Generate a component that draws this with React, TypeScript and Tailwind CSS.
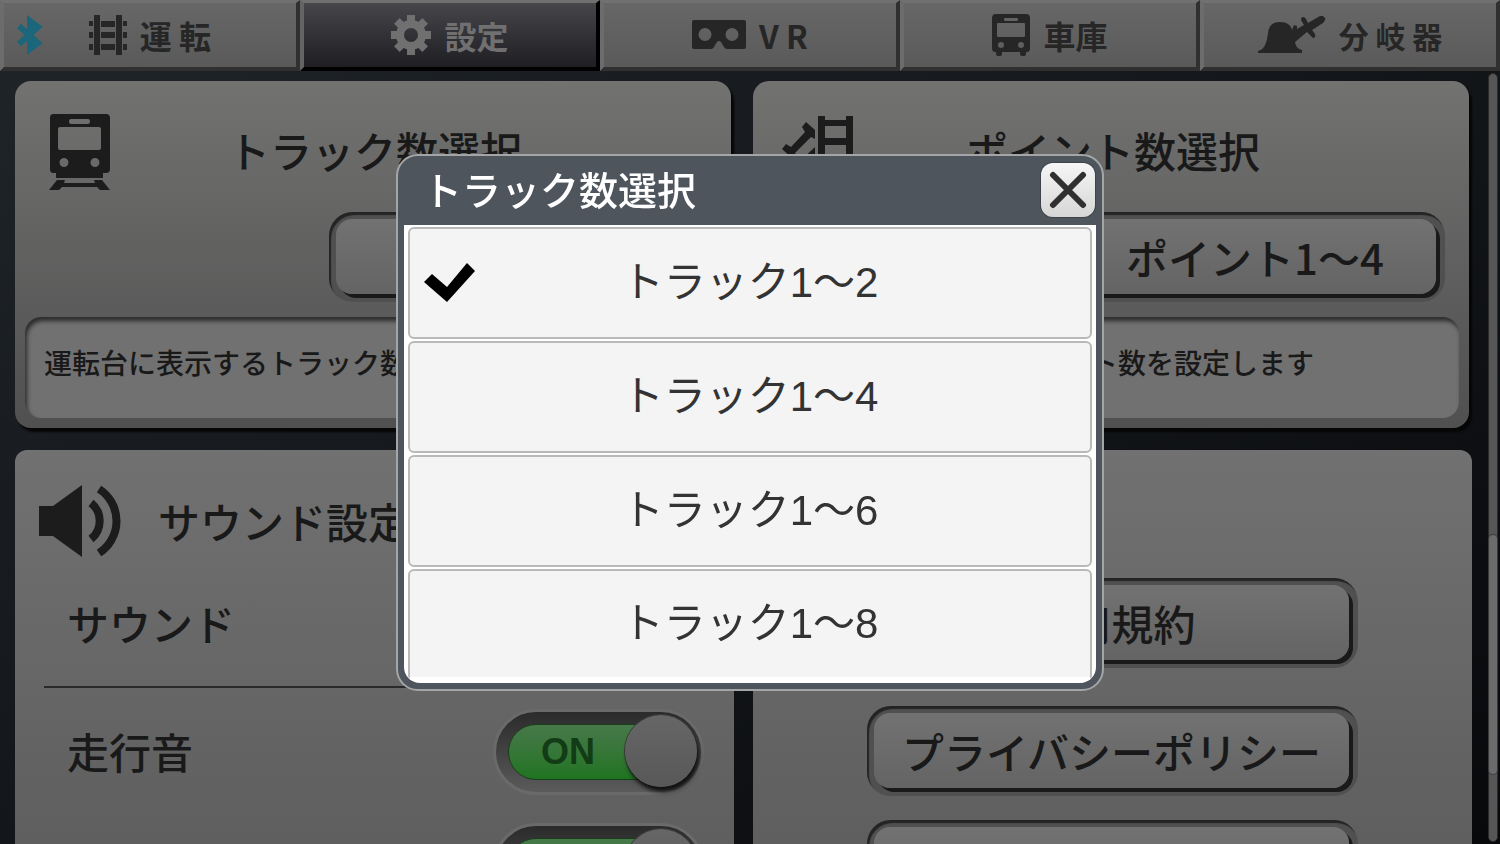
import React, { useState } from 'react';

const TRACK_OPTIONS = ['トラック1〜2', 'トラック1〜4', 'トラック1〜6', 'トラック1〜8'];

const RailIcon = () => (
	<svg width="38" height="40" viewBox="0 0 38 40" fill="#262626" aria-hidden="true">
		<path d="M5 0h6v40H5zM27 0h6v40h-6zM12 6h14v6H12zM12 17h14v6H12zM12 29h14v6H12zM0 6h4v5H0zM0 17h4v6H0zM0 29h4v6H0zM34 6h4v5h-4zM34 17h4v6h-4zM34 29h4v6h-4z" />
	</svg>
);

const GearIcon = () => (
	<svg width="40" height="40" viewBox="-20 -20 40 40" fill="#707070" aria-hidden="true">
		<path fillRule="evenodd" d="M0-15a15 15 0 1 0 0 30a15 15 0 1 0 0-30zM0-7a7 7 0 1 1 0 14a7 7 0 1 1 0-14z" />
		{[0, 45, 90, 135, 180, 225, 270, 315].map((deg) => (
			<path key={deg} transform={`rotate(${deg})`} d="M-4-20h8v8h-8z" />
		))}
	</svg>
);

const GogglesIcon = () => (
	<svg width="54" height="30" viewBox="0 0 54 30" fill="#262626" aria-hidden="true">
		<path fillRule="evenodd" d="M2 0H52Q54 0 54 2V27Q54 29 52 29H35Q33 29 32 27L29 22Q27 20 25 22L22 27Q21 29 19 29H2Q0 29 0 27V2Q0 0 2 0zM13 8a6.500 6.500 0 1 0 0 13a6.500 6.500 0 1 0 0-13zM40 8a6.500 6.500 0 1 0 0 13a6.500 6.500 0 1 0 0-13z" />
	</svg>
);

const GarageIcon = () => (
	<svg width="38" height="42" viewBox="0 0 38 42" fill="#262626" aria-hidden="true">
		<path fillRule="evenodd" d="M4 0H34Q38 0 38 4V34Q38 38 35 38H34V40Q34 42 32 42H30Q28 42 28 40V38H10V40Q10 42 8 42H6Q4 42 4 40V38H3Q0 38 0 34V4Q0 0 4 0zM13 4Q12 4 12 5Q12 7 13 7H25Q26 7 26 5Q26 4 25 4zM6 9Q5 9 5 10V22Q5 23 6 23H32Q33 23 33 22V10Q33 9 32 9zM9 28a3 3 0 1 0 0 6a3 3 0 1 0 0-6zM29 28a3 3 0 1 0 0 6a3 3 0 1 0 0-6z" />
	</svg>
);

const SwitchIcon = () => (
	<svg width="68" height="38" viewBox="0 0 68 38" fill="#262626" aria-hidden="true">
		<path d="M0 37V35C6 34 9 27 10 17C11 9 15 6 22 6C29 6 33 9 34 14L36 9L39 10L39 13L46 9L43 4Q43 1 45 1Q47 1 48 3L50 7L62 0Q65-1 67 2Q68 4 65 7L54 14L57 18Q58 21 56 22Q54 22 53 20L49 16L37 26C38 31 40 33 44 34V37z" />
	</svg>
);

const TrainIcon = () => (
	<svg width="62" height="76" viewBox="0 0 62 76" fill="#1c1c1c" aria-hidden="true">
		<path fillRule="evenodd" d="M4 0H57Q61 0 61 4V55Q61 59 57 59H54V64H7V59H4Q1 59 1 55V4Q1 0 4 0zM22 5Q20 5 20 7Q20 10 22 10H39Q41 10 41 7Q41 5 39 5zM11 13Q9 13 9 15V34Q9 36 11 36H50Q52 36 52 34V15Q52 13 50 13zM15 44a4.500 4.500 0 1 0 0 9a4.500 4.500 0 1 0 0-9zM46 44a4.500 4.500 0 1 0 0 9a4.500 4.500 0 1 0 0-9z" />
		<path d="M8 66H16L15 69H46L45 66H53L61 76H51L48 73H13L10 76H0z" />
	</svg>
);

const PointIcon = () => (
	<svg width="72" height="76" viewBox="0 0 72 76" fill="#1c1c1c" aria-hidden="true">
		<path d="M36 2h7v4h21V2h7v74h-7v-4H43v4h-7zM43 12v12h21V12zM43 31v13h21V31zM43 51v14h21V51z" fillRule="evenodd" />
		<path d="M24 8L33 16V25L29 23L13 39L16 43L12 46L0 35L4 30L9 33L23 18L20 13z" />
		<path d="M33 33V42L22 53L17 48z" />
	</svg>
);

const SpeakerIcon = () => (
	<svg width="84" height="72" viewBox="0 0 84 72" aria-hidden="true">
		<path d="M1 21H15L44 0V72L15 51H1z" fill="#1c1c1c" />
		<path d="M53 18A23 23 0 0 1 53 54M61 4A38 38 0 0 1 61 68" fill="none" stroke="#1c1c1c" strokeWidth="8" />
	</svg>
);

const BluetoothIcon = () => (
	<svg width="26" height="40" viewBox="0 0 26 40" className="absolute left-[13px]" aria-hidden="true">
		<path d="M2 11L21 28L13 34V6L21 12L2 29" fill="none" stroke="#1c667c" strokeWidth="6" />
	</svg>
);

type TabProps = { icon: React.ReactNode; label: string; active?: boolean; className?: string };

const Tab: React.FC<TabProps> = ({ icon, label, active, className = 'text-[32px]' }) => (
	<button
		type="button"
		className={`relative flex items-center justify-center gap-[13px] border-4 border-t-[3px] leading-none font-bold ${active
			? 'border-t-[#707070] border-r-black border-b-black border-l-[#646464] bg-linear-to-b from-[#47464b] to-[#1f1e23] text-[#707070]'
			: 'border-t-[#717171] border-r-[#303030] border-b-[#303030] border-l-[#6c6c6c] bg-linear-to-b from-[#676767] to-[#5a5a5a] text-[#262626]'
		} ${className}`}
	>
		{icon}
		<span className="whitespace-nowrap">{label}</span>
	</button>
);

const PlateButton: React.FC<{ label?: string; className: string }> = ({ label, className }) => (
	<div className={`rounded-3xl bg-[#505050] pt-[7px] pr-[9px] pb-2 pl-[7px] shadow-[inset_2px_3px_1px_#242424] ${className}`}>
		<button
			type="button"
			className="flex h-[75px] w-full items-center justify-center rounded-2xl bg-linear-to-b from-[#727272] to-[#646464] text-[42px] font-medium whitespace-nowrap text-[#191919] shadow-[4px_4px_0_#1a1a1a]"
		>
			{label}
		</button>
	</div>
);

const SelectPanel: React.FC<{ icon: React.ReactNode; title: string; value: string; note: string }> = ({ icon, title, value, note }) => (
	<section className="flex-1 rounded-2xl bg-linear-to-b from-[#727271] to-[#505050] px-[10px] pb-[10px] shadow-[3px_4px_2px_#060607]">
		<div className="flex h-[131px] items-start pt-[33px] pl-[15px]">
			<div className="flex w-20 shrink-0 justify-center">{icon}</div>
			<h2 className="mr-[91px] flex-1 pt-[6px] text-center text-[42px] leading-[60px] font-medium">{title}</h2>
		</div>
		<PlateButton label={value} className="mr-[14px] ml-auto w-[378px]" />
		<p className="mt-[15px] h-[101px] rounded-2xl bg-[#717171] px-[19px] pt-6 text-[28px] leading-[42px] font-medium whitespace-nowrap shadow-[inset_2px_4px_4px_#2c2c2c]">
			{note}
		</p>
	</section>
);

const SoundSwitch: React.FC<{ label?: string }> = ({ label }) => {
	const [on, setOn] = useState(true);
	return (
		<label className="flex h-[114px] items-center justify-between pr-[30px] pl-[52px] text-[42px] font-medium">
			<span className="pb-1">{label}</span>
			<span className="relative flex h-[86px] w-[211px] items-center rounded-full border-[3px] border-[#6a6a6a] bg-linear-to-b from-[#2b2b2b] to-[#5b5b5b] px-3">
				<input type="checkbox" role="switch" checked={on} onChange={() => setOn(!on)} className="absolute inset-0 z-10 opacity-0" />
				<span className="flex h-14 w-[170px] items-center rounded-full border border-[#173f19] bg-linear-to-b from-[#47784a] to-[#1f7420] pl-8 font-['Liberation_Sans'] text-[36px] font-bold text-[#123c15]">
					{label && (on ? 'ON' : 'OFF')}
				</span>
				<span className="absolute top-[3px] right-1 size-[72px] rounded-full bg-linear-to-b from-[#666666] to-[#585858] shadow-[2px_5px_4px_#111111,0_0_0_1px_#3c3c3c]" />
			</span>
		</label>
	);
};

const TrackDialog: React.FC = () => {
	const [selected, setSelected] = useState(0);
	return (
		<div className="fixed inset-0 z-20 flex items-center justify-center">
			<div role="dialog" aria-label="トラック数選択" className="w-[708px] rounded-[22px] border-2 border-[#a3a5a7] bg-[#4e555d] px-[6px] pb-[6px]">
				<div className="flex h-[69px] items-center justify-between pr-px pl-[19px]">
					<h1 className="pb-1 text-[39px] leading-none font-medium text-white">トラック数選択</h1>
					<button
						type="button"
						aria-label="閉じる"
						className="flex size-[54px] items-center justify-center rounded-xl bg-linear-to-b from-[#f6f6f6] to-[#d6d6d6] shadow-[0_0_0_1px_#3d4349]"
					>
						<svg width="38" height="38" viewBox="0 0 38 38" aria-hidden="true">
							<path d="M4 4L34 34M34 4L4 34" fill="none" stroke="#303030" strokeWidth="6" strokeLinecap="round" />
						</svg>
					</button>
				</div>
				<div className="flex flex-col gap-[2px] rounded-b-2xl bg-white px-1 pt-[2px] pb-[2px]">
					{TRACK_OPTIONS.map((option, i) => (
						<button
							key={option}
							type="button"
							onClick={() => setSelected(i)}
							className="relative flex h-28 items-center justify-center rounded-md border-2 border-[#b9b9b9] bg-[#f4f4f4] font-['Liberation_Sans','Noto_Sans_CJK_JP',sans-serif] text-[42px] text-[#333333] last:border-b-4 last:border-b-white"
						>
							{selected === i && (
								<svg width="52" height="40" viewBox="0 0 52 40" className="absolute left-[14px]" aria-hidden="true">
									<path d="M0 19L8 11L23 24L43 0L51 8L23 39z" fill="#000000" />
								</svg>
							)}
							{option}
						</button>
					))}
				</div>
			</div>
		</div>
	);
};

const App: React.FC = () => (
	<div className="flex h-screen flex-col overflow-hidden bg-linear-to-br from-[#20252a] to-[#08090b] font-['Noto_Sans_CJK_JP',sans-serif] text-[#191919]">
		<nav className="grid h-[71px] shrink-0 grid-cols-5">
			<Tab icon={<><BluetoothIcon /><RailIcon /></>} label="運 転" />
			<Tab icon={<GearIcon />} label="設定" active />
			<Tab icon={<GogglesIcon />} label="V R" />
			<Tab icon={<GarageIcon />} label="車庫" />
			<Tab icon={<SwitchIcon />} label="分 岐 器" className="text-[30px]" />
		</nav>
		<div className="flex min-h-0 flex-1">
			<main className="flex min-w-0 flex-1 flex-col gap-[22px] pt-[10px] pl-[15px]">
				<div className="mr-[19px] flex gap-[22px]">
					<SelectPanel icon={<TrainIcon />} title="トラック数選択" value="トラック1〜2" note="運転台に表示するトラック数を設定します" />
					<SelectPanel icon={<PointIcon />} title="ポイント数選択" value="ポイント1〜4" note="運転台に表示するポイント数を設定します" />
				</div>
				<div className="mr-4 flex flex-1 gap-[19px]">
					<section className="flex-1 rounded-t-xl bg-linear-to-b from-[#717171] to-[#5b5b5b]">
						<div className="flex h-32 items-center gap-9 pt-[14px] pl-[23px]">
							<SpeakerIcon />
							<h2 className="text-[42px] leading-[60px] font-medium whitespace-nowrap">サウンド設定</h2>
						</div>
						<div className="mr-7 ml-[29px] flex h-[110px] items-center border-b-2 border-[#292929] pb-5 pl-[23px] text-[42px] font-medium">
							サウンド
						</div>
						<div className="pt-[7px]">
							<SoundSwitch label="走行音" />
							<SoundSwitch />
						</div>
					</section>
					<section className="flex flex-1 flex-col items-center rounded-t-xl bg-linear-to-b from-[#717171] to-[#5b5b5b] pt-32">
						<PlateButton label="利用規約" className="mb-[38px] w-[491px]" />
						<PlateButton label="プライバシーポリシー" className="mb-6 w-[491px]" />
						<PlateButton className="w-[491px]" />
					</section>
				</div>
			</main>
			<div className="mt-[2px] mr-[2px] mb-[2px] w-[10px] rounded-full border border-[#2c2c2c] bg-[#565656] pt-[461px]">
				<div className="h-[239px] rounded-full bg-[#6b6b6b] shadow-[0_0_0_1px_#3a3a3a]" />
			</div>
		</div>
		<TrackDialog />
	</div>
);

export default App;
